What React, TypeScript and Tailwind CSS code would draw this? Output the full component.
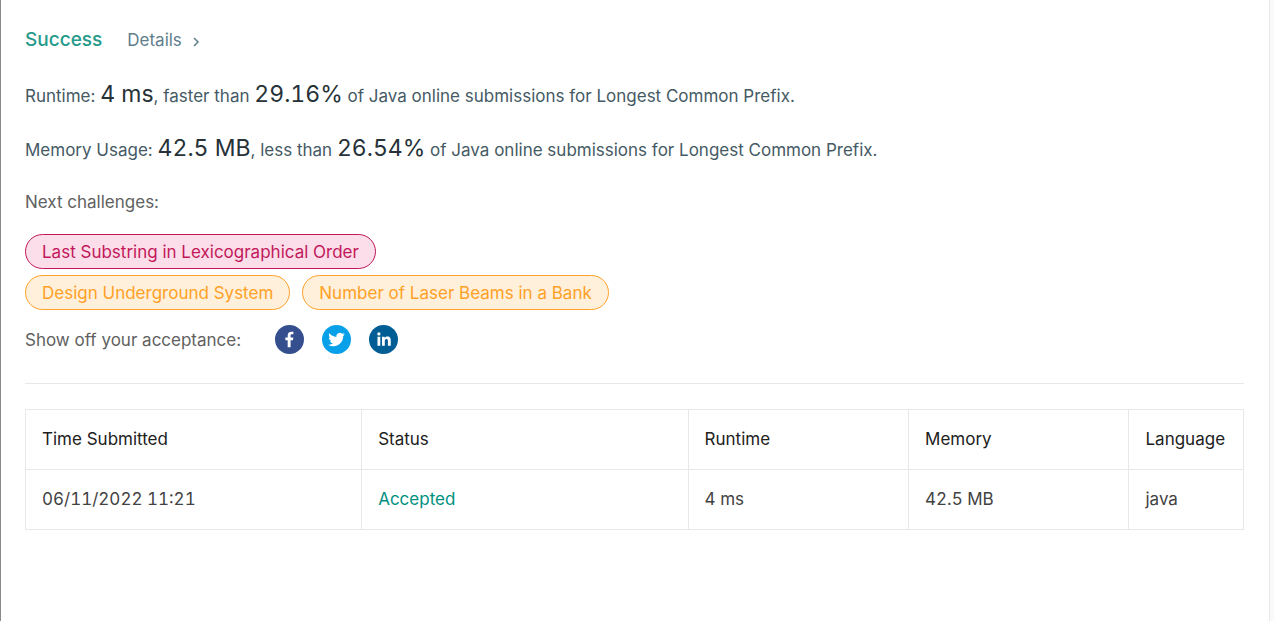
import React from "react";

const columns = [
  { title: "Time Submitted", width: "w-[27.6%]" },
  { title: "Status", width: "w-[26.8%]" },
  { title: "Runtime", width: "w-[18.1%]" },
  { title: "Memory", width: "w-[18.1%]" },
  { title: "Language", width: "w-[9.4%]" },
];
const rows = [["06/11/2022 11:21", "Accepted", "4 ms", "42.5 MB", "java"]];

const tones = {
  hard: "border-[#c2185b] bg-[#fbdee9] text-[#c2185b]",
  medium: "border-[#ffa126] bg-[#fff0dc] text-[#ffa126]",
};

const shares = [
  {
    name: "Facebook",
    color: "bg-[#354f8e]",
    path: "M34.1 47V33.3h4.6l.7-5.3h-5.3v-3.4c0-1.5.4-2.6 2.6-2.6h2.8v-4.8c-.5-.1-2.2-.2-4.1-.2-4.1 0-6.9 2.5-6.9 7.1V28H24v5.3h4.5V47h5.6z",
  },
  {
    name: "Twitter",
    color: "bg-[#08a0e9]",
    path: "M48 22.1c-1.2.5-2.4.9-3.8 1 1.4-.8 2.4-2.1 2.9-3.6-1.3.8-2.7 1.3-4.2 1.6A6.6 6.6 0 0 0 31.7 27c-5.5-.3-10.3-2.9-13.5-6.9-.6 1-.9 2.1-.9 3.3 0 2.3 1.2 4.3 2.9 5.5-1.1 0-2.1-.3-3-.8v.1c0 3.2 2.3 5.8 5.3 6.4-.6.1-1.1.2-1.7.2-.4 0-.8 0-1.2-.1.8 2.6 3.3 4.5 6.1 4.6a13.3 13.3 0 0 1-9.7 2.7 18.6 18.6 0 0 0 10.1 3c12.1 0 18.7-10 18.7-18.7v-.8c1.2-1 2.3-2.1 3.2-3.4z",
  },
  {
    name: "LinkedIn",
    color: "bg-[#005e95]",
    path: "M20.4 44h5.4V26.6h-5.4V44zm2.7-26a3.1 3.1 0 1 0 0 6.3 3.1 3.1 0 0 0 0-6.3zm16.4 8.2c-2.6 0-4.4 1.4-5.1 2.8h-.1v-2.4h-5.2V44h5.4v-8.6c0-2.3.4-4.5 3.2-4.5 2.8 0 2.8 2.6 2.8 4.6V44H46v-9.5c0-4.7-1-8.3-6.5-8.3z",
  },
];

function Figure({ children }: { children: React.ReactNode }) {
  return <span className="text-[23px] text-[#263238] tabular-nums">{children}</span>;
}

function Challenge({ tone, href, children }: { tone: keyof typeof tones; href: string; children: React.ReactNode }) {
  return (
    <a href={href} className={`flex h-[35px] items-center rounded-full border px-[16px] pt-[2px] ${tones[tone]}`}>
      {children}
    </a>
  );
}

export default function App() {
  return (
    <main className="min-h-screen border-l border-[#8a8a8a] bg-[#fafafa] pr-1 font-['Inter',sans-serif] text-[17px] text-[#424242]">
      <div className="min-h-screen border-r border-[#e8e8e8] bg-white pt-6 pr-[25px] pl-6">
        <header className="flex h-8 items-baseline gap-[25px]">
          <h1 className="text-[19px] leading-8 font-medium text-[#269a8b]">Success</h1>
          <a href="#details" className="flex items-center gap-[10px] text-[#607d8b]">
            Details
            <svg width="8" height="10" viewBox="0 0 8 10" fill="none" stroke="currentColor" strokeWidth="1.5" className="mt-[2px]" aria-hidden="true">
              <path d="M2 1l4 4-4 4" />
            </svg>
          </a>
        </header>
        <p className="mt-4 h-[54px] leading-[44px] text-[#455a64]">
          Runtime: <Figure>4 ms</Figure>, faster than <Figure>29.16%</Figure> of Java online submissions for Longest Common Prefix.
        </p>
        <p className="h-[54px] leading-[44px] text-[#455a64]">
          Memory Usage: <Figure>42.5 MB</Figure>, less than <Figure>26.54%</Figure> of Java online submissions for Longest Common Prefix.
        </p>
        <p className="h-[54px] leading-[44px] text-[#616161]">Next challenges:</p>
        <nav className="flex flex-col items-start gap-[6px]">
          <Challenge tone="hard" href="#last-substring">Last Substring in Lexicographical Order</Challenge>
          <div className="flex gap-3">
            <Challenge tone="medium" href="#underground">Design Underground System</Challenge>
            <Challenge tone="medium" href="#laser-beams">Number of Laser Beams in a Bank</Challenge>
          </div>
        </nav>
        <section className="mt-3 flex h-[35px] items-center text-[#616161]">
          <span className="mr-[34px] pt-[2px]">Show off your acceptance:</span>
          <div className="flex gap-[18px]">
            {shares.map((s) => (
              <button key={s.name} type="button" aria-label={s.name} className={`size-[29px] rounded-full ${s.color}`}>
                <svg viewBox="4 4 56 56" fill="white" aria-hidden="true" className="size-full">
                  <path d={s.path} />
                </svg>
              </button>
            ))}
          </div>
        </section>
        <hr className="mt-[26px] mb-[25px] border-[#e8e8e8]" />
        <table className="w-full table-fixed border-collapse text-left">
          <thead>
            <tr className="h-[60px]">
              {columns.map((c) => (
                <th key={c.title} className={`border border-[#e8e8e8] px-4 font-normal text-[#212121] ${c.width}`}>{c.title}</th>
              ))}
            </tr>
          </thead>
          <tbody>
            {rows.map((r) => (
              <tr key={r[0]} className="h-[60px]">
                {r.map((v) => (
                  <td key={v} className="border border-[#e8e8e8] px-4 tabular-nums">
                    {v === "Accepted" ? <a href="#submission" className="text-[#009080]">{v}</a> : v}
                  </td>
                ))}
              </tr>
            ))}
          </tbody>
        </table>
      </div>
    </main>
  );
}
